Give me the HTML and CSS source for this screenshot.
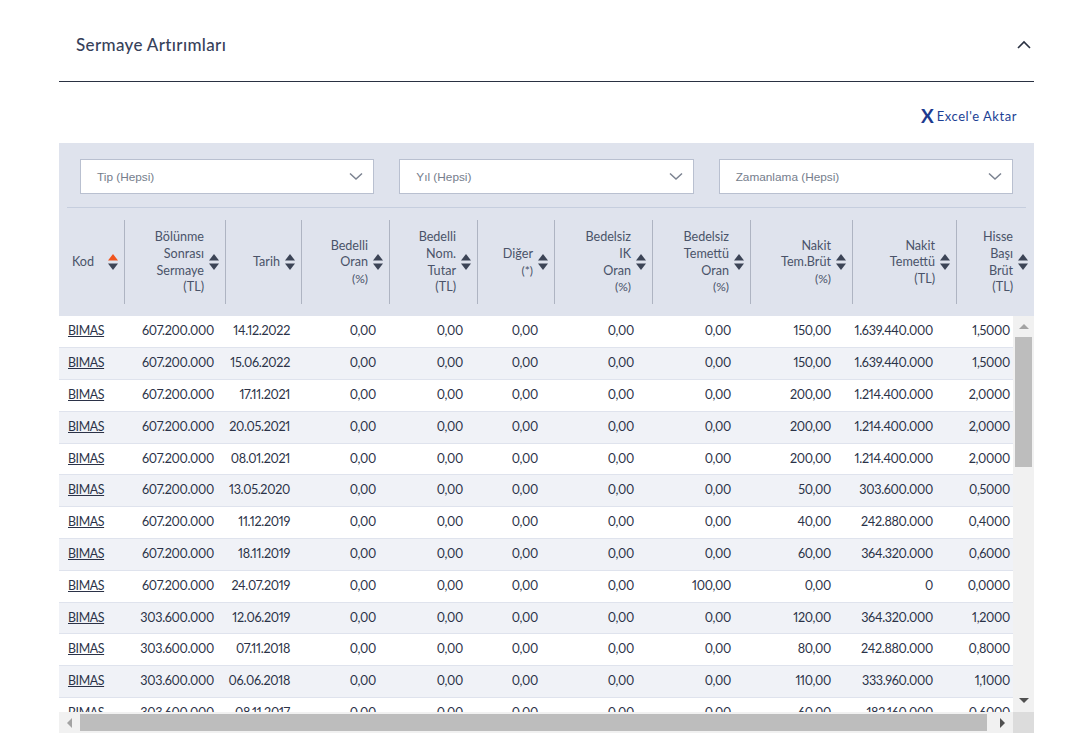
FILE: index.html
```html
<!DOCTYPE html>
<html lang="tr">
<head>
<meta charset="utf-8">
<title>Sermaye Artırımları</title>
<link rel="stylesheet" href="styles.css">
</head>
<body>
<section class="panel">
  <header class="panel-head">
    <h2>Sermaye Artırımları</h2>
    <svg class="chev-up" width="14" height="9" viewBox="0 0 14 9"><path d="M1 8 7 2l6 6" fill="none" stroke="#2a3142" stroke-width="1.6"/></svg>
  </header>
  <div class="tools"><a class="excel"><span class="x">X</span>Excel'e Aktar</a></div>
  <div class="grid-box">
    <div class="filters">
      <div class="select">Tip (Hepsi)<svg width="14" height="9" viewBox="0 0 14 9"><path d="M1 1.5 7 7l6-5.500" fill="none" stroke="#7b8290" stroke-width="1.500"/></svg></div>
      <div class="select">Yıl (Hepsi)<svg width="14" height="9" viewBox="0 0 14 9"><path d="M1 1.5 7 7l6-5.500" fill="none" stroke="#7b8290" stroke-width="1.500"/></svg></div>
      <div class="select">Zamanlama (Hepsi)<svg width="14" height="9" viewBox="0 0 14 9"><path d="M1 1.5 7 7l6-5.500" fill="none" stroke="#7b8290" stroke-width="1.500"/></svg></div>
    </div>
    <div class="head" id="head"></div>
    <div class="body-wrap">
      <div class="viewport"><table class="data"><colgroup id="cols"></colgroup><tbody id="rows"></tbody></table></div>
      <div class="vbar">
        <i class="arrow up"></i>
        <div class="vtrack"><div class="vthumb"></div></div>
        <i class="arrow down"></i>
      </div>
    </div>
    <div class="hbar">
      <div class="hbtn"><i class="arrow left"></i></div>
      <div class="hthumb"></div>
      <div class="hbtn end"><i class="arrow right"></i></div>
      <div class="corner"></div>
    </div>
  </div>
</section>
<script src="app.js"></script>
</body>
</html>
```
FILE: styles.css
```css
* { box-sizing: border-box; }
html, body { margin: 0; background: #fff; }
body { height: 745px; overflow: hidden; font-family: Lato, "Open Sans", sans-serif; color: #2b3247; font-variant-numeric: proportional-nums; }
.panel { width: 975px; margin-left: 59px; }
.panel-head { height: 82px; border-bottom: 1px solid #2a3142; display: flex; align-items: center; justify-content: space-between; padding: 8px 3px 0 17px; }
.panel-head h2 { margin: 0; font-size: 17px; font-weight: 500; letter-spacing: .35px; color: #37415a; }
.tools { height: 61px; display: flex; justify-content: flex-end; padding: 24px 17px 0 0; }
.excel { font-size: 13px; color: #1c3f94; letter-spacing: .55px; line-height: 20px; height: 20px; display: flex; align-items: center; }
.x { font-size: 19px; font-weight: 700; color: #1d3a8f; margin-right: 3px; letter-spacing: 0; }
.grid-box { background: #dfe3ed; }
.filters { display: flex; gap: 25px; margin: 0 8px; padding: 16px 13px 13px; border-bottom: 1px solid #c6cede; }
.select { flex: 1; height: 35px; background: #fff; border: 1px solid #b9c0d0; display: flex; align-items: center; justify-content: space-between; padding: 0 10px 0 16px; font: 11.800px "Liberation Sans", Arial, sans-serif; color: #757d8c; }
.head { height: 108px; display: flex; padding: 12px 0; align-items: stretch; }
.hc { height: 84px; display: flex; align-items: center; justify-content: flex-end; text-align: right; font-size: 12.600px; line-height: 16.600px; color: #4a5369; border-left: 1px solid #aeb4c2; padding-right: 6px; flex: none; }
.hc > span { padding-top: 1px; }
.hc:first-child { border-left: 0; justify-content: space-between; padding: 0 6px 0 13px; }
.hc small { font-size: 12px; }
.sort { flex: none; width: 10px; height: 16px; margin-left: 5px; }
.body-wrap { display: flex; height: 396px; background: #fff; }
.viewport { width: 954px; overflow: hidden; flex: none; }
.data { width: 961px; table-layout: fixed; border-collapse: collapse; font-size: 12.600px; letter-spacing: -.3px; }
.data td { height: 31.800px; padding: 0 10px 2px 0; text-align: right; border-bottom: 1px solid #dfe3ed; white-space: nowrap; overflow: visible; }
.data td:first-child { text-align: left; padding-left: 9px; }
.data tr:nth-child(even) { background: #f0f2f7; }
.data a { color: #2b3247; text-decoration: underline; font-size: 12.400px; letter-spacing: -.4px; }
.vbar { width: 21px; background: #f1f1f1; display: flex; flex-direction: column; align-items: center; }
.vtrack { flex: 1; width: 100%; padding: 8px 2px 0; }
.vthumb { height: 130px; background: #bdbdbd; width: 17px; }
.arrow { display: block; width: 0; height: 0; border: 5px solid transparent; flex: none; }
.up { border-bottom-color: #a3a3a3; border-top-width: 0; margin-top: 8px; }
.down { border-top-color: #505050; border-bottom-width: 0; margin-bottom: 9px; }
.left { border-right-color: #a3a3a3; border-left-width: 0; }
.right { border-left-color: #505050; border-right-width: 0; }
.hbar { height: 21px; background: #f1f1f1; display: flex; }
.hbtn { width: 21px; flex: none; display: flex; align-items: center; justify-content: center; }
.hbtn.end { width: 26px; padding-left: 4px; }
.hthumb { flex: none; width: 907px; height: 17px; margin-top: 2px; background: #bdbdbd; }
.corner { width: 21px; background: #dcdcdc; }
```
FILE: app.js
```js
var heads = [
  [65, 'Kod'],
  [101, 'Bölünme<br>Sonrası<br>Sermaye<br>(TL)'],
  [76, 'Tarih'],
  [88, 'Bedelli<br>Oran<br><small>(%)</small>'],
  [88, 'Bedelli<br>Nom.<br>Tutar<br>(TL)'],
  [77, 'Diğer<br><small>(*)</small>'],
  [98, 'Bedelsiz<br>IK<br>Oran<br><small>(%)</small>'],
  [98, 'Bedelsiz<br>Temettü<br>Oran<br><small>(%)</small>'],
  [102, 'Nakit<br>Tem.Brüt<br><small>(%)</small>'],
  [104, 'Nakit<br>Temettü<br>(TL)'],
  [78, 'Hisse<br>Başı<br>Brüt<br>(TL)']
];
var sort = function (c) {
  return '<svg class="sort" viewBox="0 0 10 16"><path d="M5 0l5 6.500H0z" fill="' + c + '"/><path d="M5 16l5-6.500H0z" fill="#3c4456"/></svg>';
};
document.getElementById('head').innerHTML = heads.map(function (h, i) {
  return '<div class="hc" style="width:' + h[0] + 'px"><span>' + h[1] + '</span>' + sort(i ? '#3c4456' : '#f0541e') + '</div>';
}).join('');
var widths = [64, 101, 76, 86, 87, 75, 96, 97, 100, 102, 77];
document.getElementById('cols').innerHTML = widths.map(function (w) { return '<col style="width:' + w + 'px">'; }).join('');
var rows = [
  ['607.200.000','14.12.2022','150,00','1.639.440.000','1,5000','0,00'],
  ['607.200.000','15.06.2022','150,00','1.639.440.000','1,5000','0,00'],
  ['607.200.000','17.11.2021','200,00','1.214.400.000','2,0000','0,00'],
  ['607.200.000','20.05.2021','200,00','1.214.400.000','2,0000','0,00'],
  ['607.200.000','08.01.2021','200,00','1.214.400.000','2,0000','0,00'],
  ['607.200.000','13.05.2020','50,00','303.600.000','0,5000','0,00'],
  ['607.200.000','11.12.2019','40,00','242.880.000','0,4000','0,00'],
  ['607.200.000','18.11.2019','60,00','364.320.000','0,6000','0,00'],
  ['607.200.000','24.07.2019','0,00','0','0,0000','100,00'],
  ['303.600.000','12.06.2019','120,00','364.320.000','1,2000','0,00'],
  ['303.600.000','07.11.2018','80,00','242.880.000','0,8000','0,00'],
  ['303.600.000','06.06.2018','110,00','333.960.000','1,1000','0,00'],
  ['303.600.000','08.11.2017','60,00','182.160.000','0,6000','0,00']
];
document.getElementById('rows').innerHTML = rows.map(function (r) {
  var z = '<td>0,00</td>';
  return '<tr><td><a>BIMAS</a></td><td>' + r[0] + '</td><td>' + r[1] + '</td>' + z + z + z + z + '<td>' + r[5] + '</td><td>' + r[2] + '</td><td>' + r[3] + '</td><td>' + r[4] + '</td></tr>';
}).join('');
```
